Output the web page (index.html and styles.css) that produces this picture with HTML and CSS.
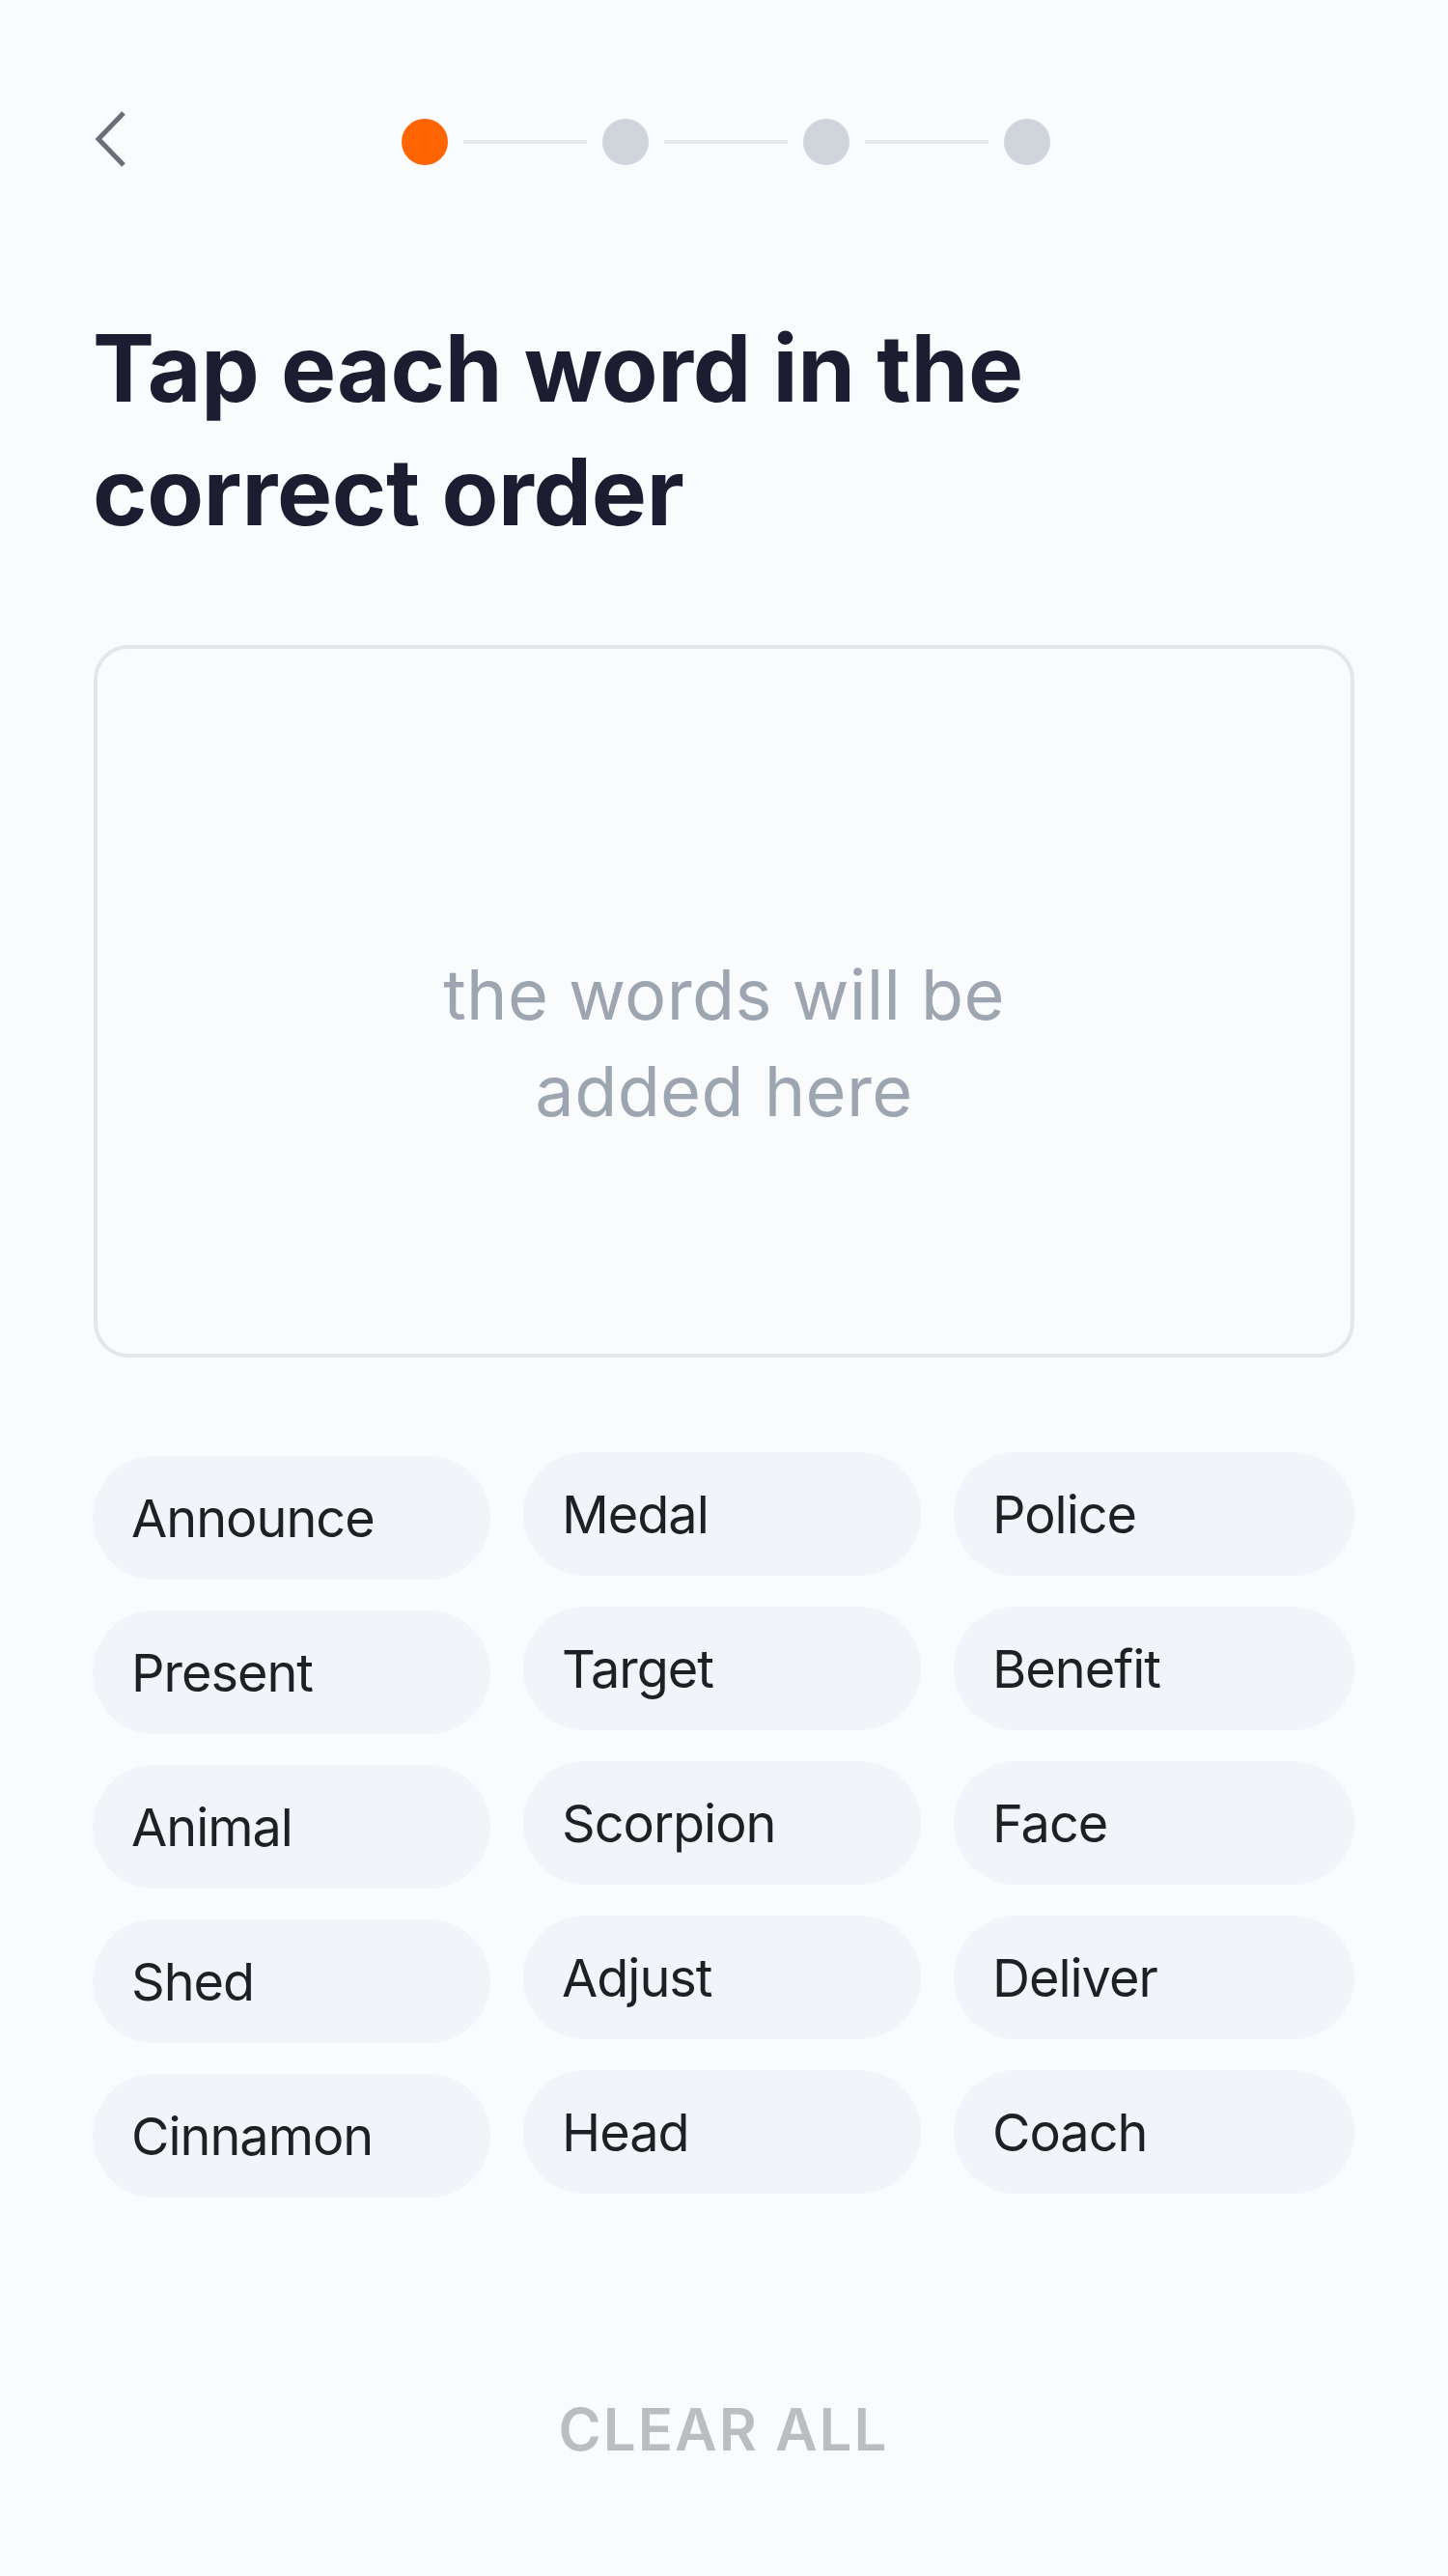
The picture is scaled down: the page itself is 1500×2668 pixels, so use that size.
FILE: index.html
```html
<!DOCTYPE html>
<html lang="en">
<head>
    <meta charset="UTF-8">
    <meta name="viewport" content="width=device-width, initial-scale=1.0">
    <title>Word Order</title>
    <link rel="stylesheet" href="styles.css">
</head>
<body>
    <div class="screen">
        <header class="top-bar">
            <button class="back-btn" aria-label="Back">
                <svg width="36" height="60" viewBox="0 0 36 60">
                    <path d="M30 3 L4 30 L30 57" fill="none" stroke="#6b6e78" stroke-width="5"/>
                </svg>
            </button>
            <div class="stepper">
                <span class="step active"></span>
                <span class="step-line"></span>
                <span class="step"></span>
                <span class="step-line"></span>
                <span class="step"></span>
                <span class="step-line"></span>
                <span class="step"></span>
            </div>
            <div></div>
        </header>

        <h1 class="title">Tap each word in the correct order</h1>

        <div class="answer-box">
            <p class="placeholder">the words will be<br>added here</p>
        </div>

        <div class="word-grid">
            <div class="word-col first">
                <button class="chip">Announce</button>
                <button class="chip">Present</button>
                <button class="chip">Animal</button>
                <button class="chip">Shed</button>
                <button class="chip">Cinnamon</button>
            </div>
            <div class="word-col">
                <button class="chip">Medal</button>
                <button class="chip">Target</button>
                <button class="chip">Scorpion</button>
                <button class="chip">Adjust</button>
                <button class="chip">Head</button>
            </div>
            <div class="word-col wide">
                <button class="chip">Police</button>
                <button class="chip">Benefit</button>
                <button class="chip">Face</button>
                <button class="chip">Deliver</button>
                <button class="chip">Coach</button>
            </div>
        </div>

        <div class="footer">
            <button class="clear-btn">CLEAR ALL</button>
        </div>
    </div>
</body>
</html>
```

FILE: styles.css
```css
body {
    margin: 0;
    font-family: Inter, "Noto Sans", sans-serif;
    background: #fafbfd;
}

.screen {
    padding: 99px 97px 0 96px;
}

/* Top bar with back arrow and progress */
.top-bar {
    display: grid;
    grid-template-columns: 1fr auto 1fr;
    align-items: center;
    height: 96px;
}

.back-btn {
    background: none;
    border: none;
    padding: 0 0 0 2px;
    margin-top: -7px;
    width: 48px;
    height: 64px;
    display: flex;
    align-items: center;
    cursor: pointer;
}

.stepper {
    display: flex;
    align-items: center;
    gap: 16px;
    margin-left: 4px;
}

.step {
    width: 48px;
    height: 48px;
    border-radius: 50%;
    background-color: #d0d5dc;
}

.step.active {
    background-color: #ff6502;
}

.step-line {
    width: 128px;
    height: 4px;
    background-color: #e5e7eb;
}

/* Heading */
.title {
    margin: 122px 0 0 0;
    width: 1000px;
    font-size: 96px;
    line-height: 128px;
    font-weight: 700;
    color: #1c1d30;
    letter-spacing: -0.25px;
}

/* Drop area */
.answer-box {
    margin-top: 95px;
    height: 738px;
    box-sizing: border-box;
    border: 4px solid #e2e7ec;
    border-radius: 36px;
    display: flex;
    align-items: center;
    justify-content: center;
    padding-top: 86px;
    margin-left: 1px;
}

.placeholder {
    margin: 0;
    font-size: 72px;
    line-height: 100px;
    letter-spacing: 0.4px;
    color: #9ca5b0;
    text-align: center;
}

/* Word chips */
.word-grid {
    margin-top: 98px;
    display: grid;
    grid-template-columns: 412px 412px 415px;
    justify-content: space-between;
}

.word-col {
    display: flex;
    flex-direction: column;
    gap: 32px;
}

.word-col.first {
    margin-top: 4px;
}

.chip {
    height: 128px;
    border: none;
    border-radius: 64px;
    background-color: #f1f4f8;
    padding: 0 40px;
    text-align: left;
    font-family: Inter, "Noto Sans", sans-serif;
    font-size: 54px;
    letter-spacing: -1px;
    color: #1f2023;
    cursor: pointer;
}

/* Bottom action */
.footer {
    margin-top: 204px;
    display: flex;
    justify-content: center;
}

.clear-btn {
    background: none;
    border: none;
    padding: 0;
    font-family: Inter, "Noto Sans", sans-serif;
    font-size: 60px;
    font-weight: 600;
    letter-spacing: 2px;
    color: #bbbdc1;
    cursor: pointer;
}
```
